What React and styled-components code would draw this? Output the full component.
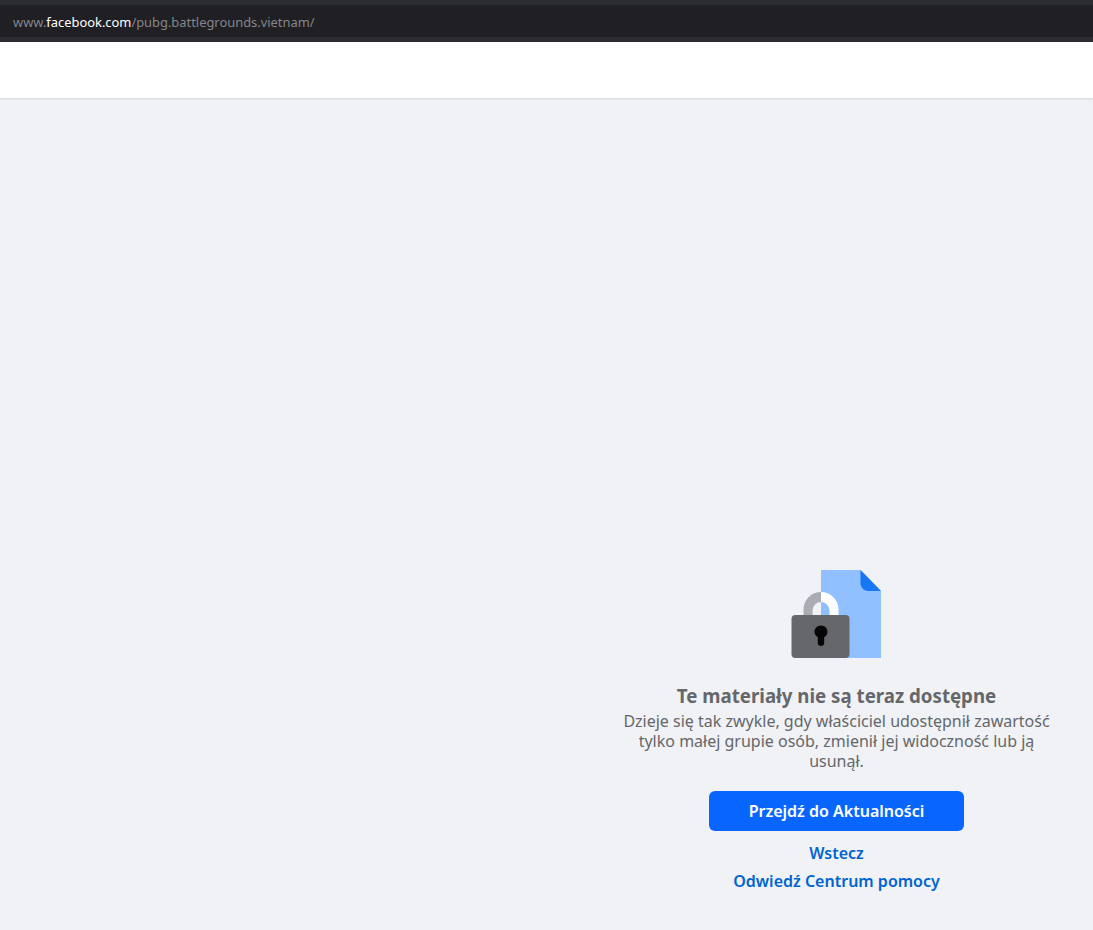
import React from 'react'
import styled, { createGlobalStyle } from 'styled-components'

const GlobalStyle = createGlobalStyle`
  html, body { margin: 0; padding: 0; height: 100%; }
  body { background: #f0f2f5; font-family: "Noto Sans", "Open Sans", Arial, sans-serif; }
`

const LockDoc = () => (
  <svg width="90" height="88" viewBox="0 0 90 88" fill="none">
    <path d="M30 0H69.500L90 21V88H30Z" fill="#90c0ff" />
    <path d="M69.500 0L90 21H77.500C73 21 69.500 17.500 69.500 13Z" fill="#1877f2" />
    <path d="M30 22A17.500 17.500 0 0 0 12.500 39.500V50H21.500V40.500A8.500 8.500 0 0 1 30 32Z" fill="#a9acb0" />
    <path d="M30 22A17.500 17.500 0 0 1 47.500 39.500V50H38.500V40.500A8.500 8.500 0 0 0 30 32Z" fill="#fff" />
    <rect x="0.500" y="45" width="58" height="43" rx="4" fill="#65676b" />
    <path d="M30 55.500C26.400 55.500 23.500 58.300 23.500 61.700C23.500 64 24.800 66 26.800 67.100V73C26.800 74.700 28.200 76 30 76C31.800 76 33.200 74.700 33.200 73V67.100C35.200 66 36.500 64 36.500 61.700C36.500 58.300 33.600 55.500 30 55.500Z" fill="#050505" />
  </svg>
)

export default function App() {
  return (
    <Page>
      <GlobalStyle />
      <AddressBar>
        <AddressField>
          <Url>
            www.<b>facebook.com</b>/pubg.battlegrounds.vietnam/
          </Url>
        </AddressField>
      </AddressBar>
      <Header />
      <Main>
        <Notice>
          <LockDoc />
          <Title>Te materiały nie są teraz dostępne</Title>
          <Description>
            Dzieje się tak zwykle, gdy właściciel udostępnił zawartość tylko małej grupie osób, zmienił jej widoczność lub ją usunął.
          </Description>
          <PrimaryButton>Przejdź do Aktualności</PrimaryButton>
          <TextLink>Wstecz</TextLink>
          <TextLink $tight>Odwiedź Centrum pomocy</TextLink>
        </Notice>
      </Main>
    </Page>
  )
}

const Page = styled.div`
  display: flex;
  flex-direction: column;
  height: 930px;
  overflow: hidden;
`
const AddressBar = styled.div`
  height: 42px;
  box-sizing: border-box;
  padding: 5px 0;
  background: #2c2c33;
  flex-shrink: 0;
  display: flex;
`
const AddressField = styled.div`
  flex: 1;
  background: #1f1f24;
  display: flex;
  align-items: center;
  padding: 2px 0 0 13px;
`
const Url = styled.span`
  font-size: 12.9px;
  color: #85868a;
  b {
    font-weight: 400;
    color: #fff;
  }
`
const Header = styled.div`
  height: 56px;
  flex-shrink: 0;
  background: #fff;
  box-shadow: 0 1px 2px rgba(0, 0, 0, 0.12);
  position: relative;
`
const Main = styled.main`
  flex: 1;
  padding: 472px 0 0 579px;
`
const Notice = styled.div`
  width: 514px;
  display: flex;
  flex-direction: column;
  align-items: center;
`
const Title = styled.h2`
  margin: 26px 0 0;
  padding-left: 1px;
  font-size: 18.7px;
  line-height: 24px;
  font-weight: 700;
  color: #65676b;
`
const Description = styled.p`
  margin: 3px 0 0;
  width: 440px;
  padding-left: 1px;
  text-align: center;
  font-size: 16px;
  line-height: 20px;
  color: #65676b;
`
const PrimaryButton = styled.button`
  margin-top: 20px;
  width: 255px;
  height: 40px;
  border: 0;
  border-radius: 6px;
  padding: 0 0 0 1px;
  background: #0866ff;
  color: #fff;
  font: 600 16px "Noto Sans", sans-serif;
`
const TextLink = styled.a`
  margin-top: ${p => (p.$tight ? '8px' : '12px')};
  padding-left: 1px;
  font-size: 16px;
  line-height: 20px;
  font-weight: 600;
  color: #0064d1;
`
